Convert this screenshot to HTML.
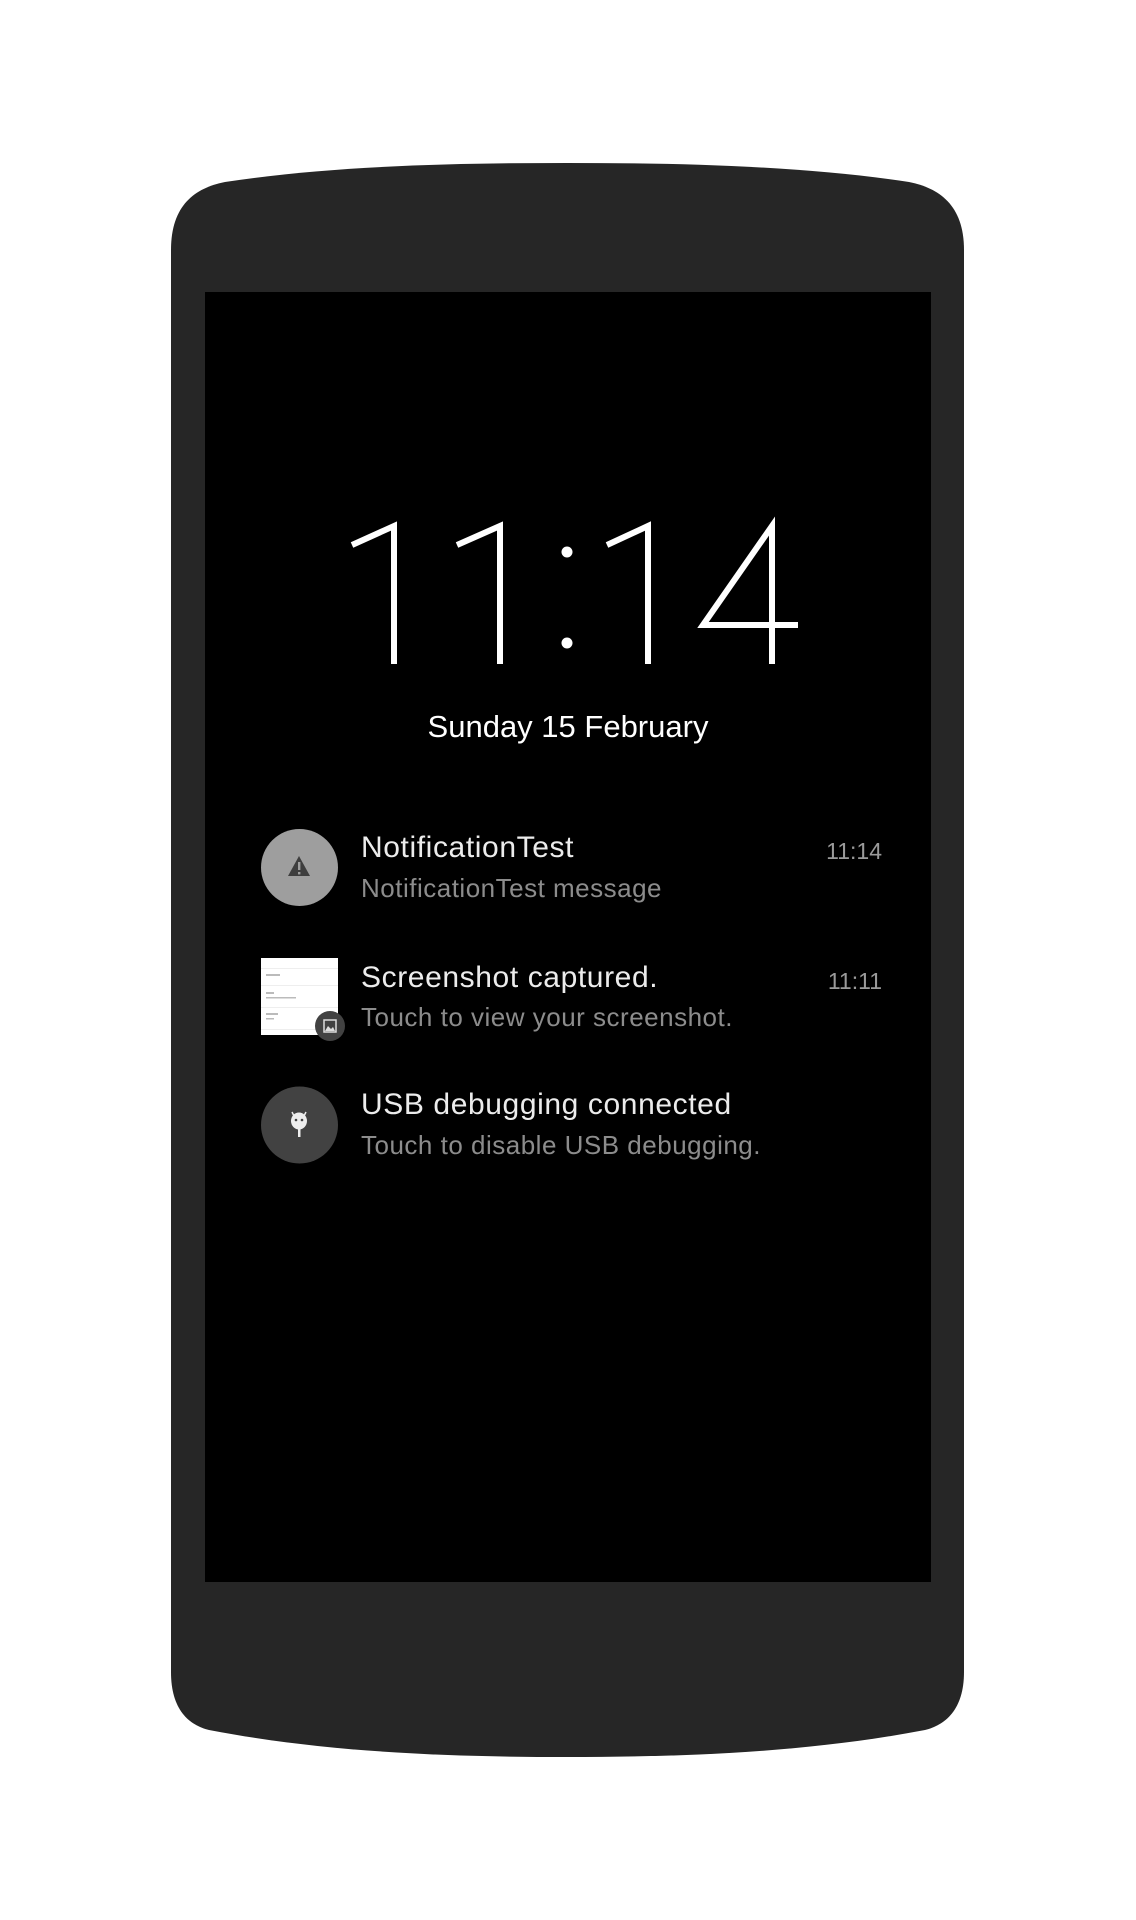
<!DOCTYPE html>
<html><head><meta charset="utf-8"><style>
html,body{margin:0;padding:0;background:#fff;}
body{width:1136px;height:1920px;position:relative;overflow:hidden;font-family:"Liberation Sans",sans-serif;}
.t{position:absolute;white-space:nowrap;}
.title{color:#ececec;font-size:30px;letter-spacing:0.6px;}
.sub{color:#8c8c8c;font-size:26px;letter-spacing:0.5px;}
.time{color:#9a9a9a;font-size:23px;text-align:right;width:100px;}
</style></head><body>
<svg width="1136" height="1920" style="position:absolute;left:0;top:0">
<path d="M171,250 C171,205 195,188 225,182 C330,166 450,163 567,163 C684,163 804,166 909,182 C939,188 964,205 964,250 L964,1672 C964,1710 945,1725 925,1730 C810,1752 690,1757 567,1757 C444,1757 324,1752 209,1730 C189,1725 171,1710 171,1672 Z" fill="#262626"/>
<rect x="205" y="292" width="726" height="1290" fill="#000"/>
<g stroke="#fff" stroke-width="6" fill="none" stroke-linecap="butt">
<path d="M352,545 L394,526 L394,664"/>
<path d="M457,545 L500,526 L500,664"/>
<path d="M607,545 L648,526 L648,664"/>
<path d="M798,625 L703,625 L772,526 L772,664"/>
</g>
<circle cx="567" cy="552" r="5.5" fill="#fff"/>
<circle cx="567" cy="643" r="5.5" fill="#fff"/>
<circle cx="299.5" cy="867.5" r="38.5" fill="#9e9e9e"/>
<path d="M299,856 L310,876 L288,876 Z" fill="#3e3e3e"/>
<rect x="298" y="862" width="2.4" height="8" fill="#9e9e9e"/>
<rect x="298" y="872" width="2.4" height="2.4" fill="#9e9e9e"/>
<rect x="261" y="958" width="77" height="77" fill="#fff"/>
<g fill="#bbb">
<rect x="266" y="974" width="14" height="2"/>
<rect x="266" y="992" width="8" height="2"/><rect x="266" y="997" width="30" height="1.5"/>
<rect x="266" y="1013" width="12" height="2"/><rect x="266" y="1018" width="8" height="1.5"/>
</g>
<g fill="#eee"><rect x="261" y="968" width="77" height="1"/><rect x="261" y="985" width="77" height="1"/><rect x="261" y="1007" width="77" height="1"/><rect x="261" y="1029" width="77" height="1"/></g>
<circle cx="330" cy="1026" r="15" fill="#424242"/>
<rect x="324" y="1020" width="12" height="12" fill="none" stroke="#ddd" stroke-width="1.5"/>
<path d="M325,1031 L328,1026 L331,1029 L333,1027 L335,1031 Z" fill="#ddd"/>
<circle cx="299.5" cy="1125" r="38.5" fill="#424242"/>
<ellipse cx="299" cy="1121" rx="8" ry="8.5" fill="#eee"/>
<path d="M292,1112 L294,1116 M306,1112 L304,1116" stroke="#eee" stroke-width="1.5"/>
<circle cx="296" cy="1120" r="1.3" fill="#424242"/><circle cx="302" cy="1120" r="1.3" fill="#424242"/>
<rect x="298" y="1129" width="2.5" height="8" fill="#eee"/>
</svg>
<div class="t" style="left:0;width:1136px;text-align:center;top:709px;color:#fff;font-size:31px;">Sunday 15 February</div>

<div class="t title" style="left:361px;top:831px;">NotificationTest</div>
<div class="t sub" style="left:361px;top:873px;">NotificationTest message</div>
<div class="t time" style="left:782px;top:838px;">11:14</div>

<div class="t title" style="left:361px;top:961px;">Screenshot captured.</div>
<div class="t sub" style="left:361px;top:1002px;">Touch to view your screenshot.</div>
<div class="t time" style="left:782px;top:968px;">11:11</div>

<div class="t title" style="left:361px;top:1088px;">USB debugging connected</div>
<div class="t sub" style="left:361px;top:1130px;">Touch to disable USB debugging.</div>
</body></html>
